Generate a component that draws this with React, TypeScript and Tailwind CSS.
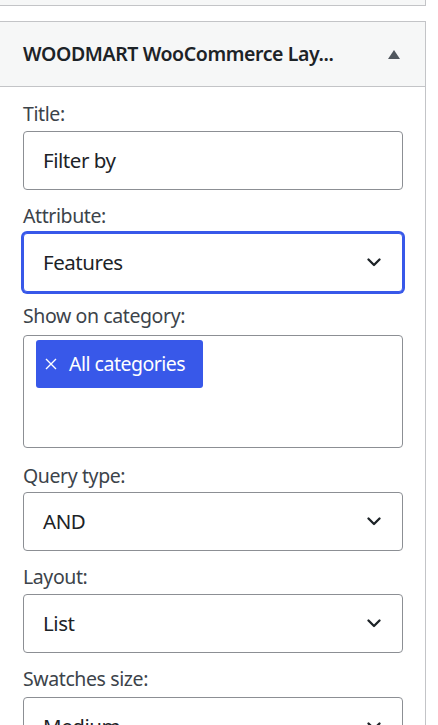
import React from "react";

const Chevron = () => (
  <svg width="14" height="9" viewBox="0 0 14 9" fill="none" className="shrink-0">
    <path d="M1.5 1.5 L7 7 L12.5 1.5" stroke="#1d2327" strokeWidth="2.3" strokeLinecap="round" strokeLinejoin="round" />
  </svg>
);

const Label = ({ children, className = "" }: { children: React.ReactNode; className?: string }) => (
  <div className={`text-[19.5px] leading-[24px] tracking-[-0.4px] text-[#3c434a] ${className}`}>{children}</div>
);

const Select = ({ value, focused = false }: { value: string; focused?: boolean }) => (
  <div
    className={`h-[59px] w-[380px] rounded-[4px] border bg-white flex items-center justify-between pl-[19px] pr-[21px] text-[20.5px] tracking-[-0.45px] text-[#1d2327] ${
      focused ? "border-[#3858e9] shadow-[0_0_0_2px_#3858e9]" : "border-[#8c8f94]"
    }`}
  >
    <span>{value}</span>
    <Chevron />
  </div>
);

export default function App() {
  return (
    <div className="w-[438px] h-[725px] bg-white overflow-hidden font-['Noto_Sans',sans-serif]">
      <div className="w-[426px] h-[6px] bg-[#f6f7f7] border-b border-r border-[#c3c4c7]" />
      <div className="mt-[15px] w-[426px] border-t border-r border-[#c3c4c7]">
        <div className="h-[65px] bg-[#f6f7f7] border-b border-[#c3c4c7] flex items-center justify-between pl-[23px] pr-[25px]">
          <span className="text-[19.5px] font-semibold tracking-[-0.4px] text-[#1d2327]">WOODMART WooCommerce Lay...</span>
          <svg width="12" height="9" viewBox="0 0 12 9">
            <path d="M6 0 L12 9 L0 9 Z" fill="#50575e" />
          </svg>
        </div>
        <div className="pl-[23px] pr-[22px] pt-[15px] pb-[40px]">
          <Label className="mb-[5px]">Title:</Label>
          <div className="h-[59px] w-[380px] rounded-[4px] border border-[#8c8f94] flex items-center pl-[19px] text-[20.5px] tracking-[-0.45px] text-[#1d2327]">
            Filter by
          </div>

          <Label className="mt-[14px] mb-[5px]">Attribute:</Label>
          <Select value="Features" focused />

          <Label className="mt-[12px] mb-[7px]">Show on category:</Label>
          <div className="h-[113px] w-[380px] rounded-[4px] border border-[#8c8f94] pt-[4px] pl-[12px]">
            <div className="inline-flex items-center h-[48px] rounded-[3px] bg-[#3858e9] text-white text-[19.5px] tracking-[-0.5px] pl-[9px] pr-[18px] gap-[12px]">
              <svg width="12" height="12" viewBox="0 0 12 12" className="shrink-0">
                <path d="M1 1 L11 11 M11 1 L1 11" stroke="white" strokeWidth="1.4" />
              </svg>
              <span>All categories</span>
            </div>
          </div>

          <Label className="mt-[16px] mb-[4px]">Query type:</Label>
          <Select value="AND" />

          <Label className="mt-[14px] mb-[5px]">Layout:</Label>
          <Select value="List" />

          <Label className="mt-[14px] mb-[6px]">Swatches size:</Label>
          <Select value="Medium" />
        </div>
      </div>
    </div>
  );
}
